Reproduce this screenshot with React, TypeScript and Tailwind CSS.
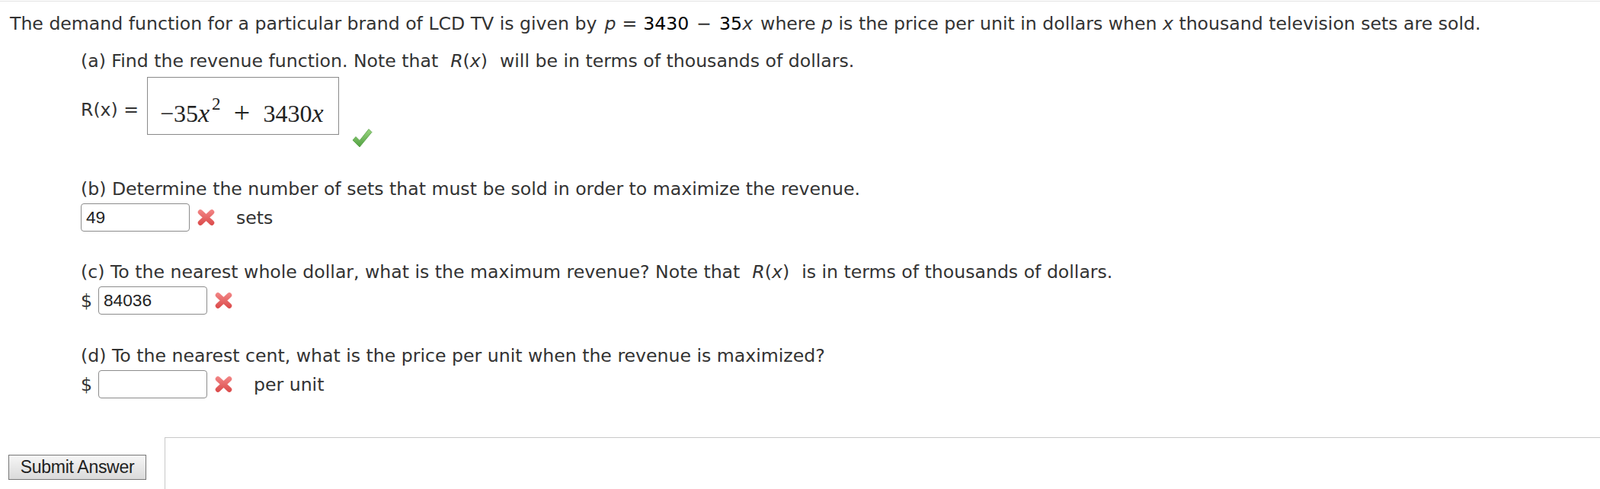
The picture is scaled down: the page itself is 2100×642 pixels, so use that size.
import React from "react";

function Check() {
  return (
    <svg width="27" height="27" viewBox="0 0 27 27">
      <defs>
        <linearGradient id="cg" x1="0" y1="0" x2="0" y2="27" gradientUnits="userSpaceOnUse">
          <stop offset="0" stopColor="#9fd882" />
          <stop offset="1" stopColor="#4a9c3c" />
        </linearGradient>
      </defs>
      <path
        d="M10 25 L1 16 L5 11.5 L10 16.5 L22 1.5 L26 5.5 Z"
        fill="url(#cg)"
        stroke="#55a046"
        strokeWidth="0.8"
        strokeLinejoin="round"
      />
    </svg>
  );
}

function XMark() {
  return (
    <svg width="25" height="23" viewBox="0 0 25 23">
      <defs>
        <linearGradient id="xg" x1="0" y1="0" x2="0" y2="23" gradientUnits="userSpaceOnUse">
          <stop offset="0" stopColor="#f48a8a" />
          <stop offset="1" stopColor="#d94646" />
        </linearGradient>
      </defs>
      <path d="M5 4.5 L20 18.5 M20 4.5 L5 18.5" stroke="url(#xg)" strokeWidth="6.5" strokeLinecap="round" />
    </svg>
  );
}

function Rx() {
  return (
    <span className="mx-[16px]">
      <i>R</i>(<i>x</i>)
    </span>
  );
}

const inputCls =
  "w-[143px] h-[37px] border border-[#8c8c8c] rounded-[4px] bg-white pl-[6px] font-['Liberation_Sans',Arial,sans-serif] text-[22.7px] text-[#222] outline-none";

export default function App() {
  return (
    <div className="w-[2100px] h-[642px] bg-white overflow-hidden font-['DejaVu_Sans',Verdana,sans-serif] text-[23.6px] leading-[28px] text-[#333]">
      <div className="h-[1px]" />
      <div className="border-t border-[#e2e2e2]" />
      <div className="pl-[13px] pt-[14.5px] whitespace-nowrap">
        The demand function for a particular brand of LCD TV is given by
        <span className="mx-[10px]">
          <i>p</i>
          <span className="mx-[8px]">=</span>
          <span className="text-black">3430</span>
          <span className="mx-[10px]">−</span>
          <span className="text-black">35</span>
          <i>x</i>
        </span>
        where <i>p</i> is the price per unit in dollars when <i>x</i> thousand television sets are sold.
      </div>

      <div className="pl-[106px]">
        <div className="mt-[21px] whitespace-nowrap">
          (a) Find the revenue function. Note that
          <Rx />
          will be in terms of thousands of dollars.
        </div>

        <div className="mt-[7.5px] flex items-start">
          <div className="mt-[28.5px] w-[87px] whitespace-nowrap">R(x) =</div>
          <div className="w-[252px] h-[76px] border border-[#8a8a8a] pl-[16px] pt-[27px] font-['Liberation_Serif','Times_New_Roman',serif] text-[32px] leading-[36px] text-[#222] whitespace-nowrap">
            <span className="inline-block w-[18px]">−</span>
            <span>35</span>
            <i className="inline-block w-[18px] text-[34px]">x</i>
            <span className="relative top-[-16px] text-[23px] leading-none">2</span>
            <span className="inline-block w-[56px] text-center text-[38px] relative top-[1px]">+</span>
            <span>3430</span>
            <i className="text-[34px]">x</i>
          </div>
          <div className="ml-[17px] mt-[67px]">
            <Check />
          </div>
        </div>

        <div className="mt-[38.5px] whitespace-nowrap">
          (b) Determine the number of sets that must be sold in order to maximize the revenue.
        </div>
        <div className="mt-[5.5px] flex items-center">
          <input className={inputCls} defaultValue="49" readOnly />
          <div className="ml-[9px] flex">
            <XMark />
          </div>
          <span className="ml-[27px]">sets</span>
        </div>

        <div className="mt-[38.5px] whitespace-nowrap">
          (c) To the nearest whole dollar, what is the maximum revenue? Note that
          <Rx />
          is in terms of thousands of dollars.
        </div>
        <div className="mt-[5.5px] flex items-center">
          <span className="w-[23px]">$</span>
          <input className={inputCls} defaultValue="84036" readOnly />
          <div className="ml-[9px] flex">
            <XMark />
          </div>
        </div>

        <div className="mt-[39.5px] whitespace-nowrap">
          (d) To the nearest cent, what is the price per unit when the revenue is maximized?
        </div>
        <div className="mt-[5.5px] flex items-center">
          <span className="w-[23px]">$</span>
          <input className={inputCls} defaultValue="" readOnly />
          <div className="ml-[9px] flex">
            <XMark />
          </div>
          <span className="ml-[27px]">per unit</span>
        </div>
      </div>

      <div className="mt-[51px] flex">
        <div className="w-[216px] pl-[11px] pt-[23px]">
          <button className="w-[181px] h-[33px] border border-[#777] bg-gradient-to-b from-[#f6f6f6] to-[#dadada] font-['Liberation_Sans',Arial,sans-serif] text-[23px] leading-[31px] text-[#222] tracking-[-0.3px]">
            Submit Answer
          </button>
        </div>
        <div className="flex-1 h-[68px] border-t border-l border-[#c8c8c8]" />
      </div>
    </div>
  );
}
